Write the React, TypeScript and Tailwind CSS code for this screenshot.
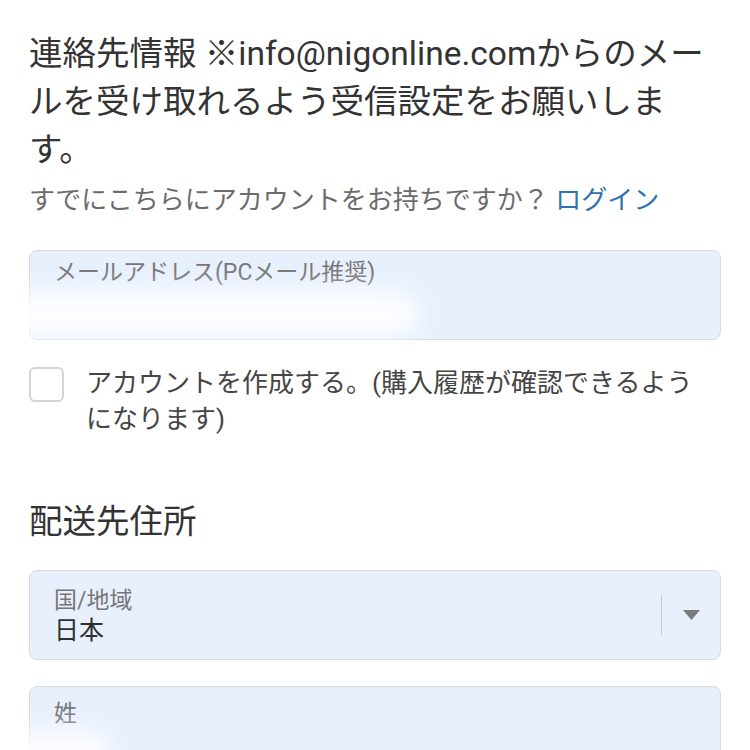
export default function App() {
  return (
    <div className="w-[750px] h-[750px] overflow-hidden bg-white font-['Roboto','Noto_Sans_CJK_JP',sans-serif]">
      <div className="px-[29px] pt-[30px]">
        <h2 className="text-[33.5px] leading-[48px] text-[#333333] font-normal">
          連絡先情報 ※info@nigonline.comからのメー
          <br />
          ルを受け取れるよう受信設定をお願いしま
          <br />
          す。
        </h2>
        <p className="mt-[8px] text-[26px] leading-[36px] text-[#6b6b6b]">
          すでにこちらにアカウントをお持ちですか？ <span className="text-[#2f72ad]">ログイン</span>
        </p>

        <div className="relative mt-[32px] h-[90px] rounded-[8px] border border-[#d6d9de] bg-[#e8f0fe] px-[24px] pt-[10px]">
          <div className="text-[23px] leading-[24px] text-[#767676]">メールアドレス(PCメール推奨)</div>
          <div className="pointer-events-none absolute left-[-50px] top-[40px] h-[46px] w-[440px] rounded-full bg-white/90 blur-md"></div>
        </div>

        <div className="mt-[25px] flex items-start gap-[22px]">
          <div className="mt-[2px] h-[35px] w-[35px] shrink-0 rounded-[6px] border-2 border-[#d4d4d4] bg-white"></div>
          <div className="text-[26px] leading-[36px] text-[#454545]">
            アカウントを作成する。(購入履歴が確認できるよう
            <br />
            になります)
          </div>
        </div>

        <h2 className="mt-[61px] text-[33.5px] leading-[48px] text-[#333333] font-normal">配送先住所</h2>

        <div className="mt-[24px] flex h-[90px] items-stretch rounded-[8px] border border-[#d6d9de] bg-[#e8f0fe]">
          <div className="flex-1 pl-[24px] pt-[18px]">
            <div className="text-[23px] leading-[24px] text-[#767676]">国/地域</div>
            <div className="text-[25px] leading-[36px] text-[#2f2f2f]">日本</div>
          </div>
          <div className="flex items-center">
            <div className="h-[40px] w-px bg-[#c9c9c9]"></div>
            <div className="flex w-[58px] items-center justify-center">
              <svg width="17" height="10" viewBox="0 0 17 10">
                <path d="M0 0 L17 0 L8.5 10 Z" fill="#7a7a7a" />
              </svg>
            </div>
          </div>
        </div>

        <div className="relative mt-[26px] h-[90px] rounded-[8px] border border-[#d6d9de] bg-[#e8f0fe] px-[24px] pt-[15px]">
          <div className="text-[23px] leading-[24px] text-[#767676]">姓</div>
          <div className="pointer-events-none absolute left-[-50px] top-[44px] h-[40px] w-[130px] rounded-full bg-white/90 blur-md"></div>
        </div>
      </div>
    </div>
  );
}
